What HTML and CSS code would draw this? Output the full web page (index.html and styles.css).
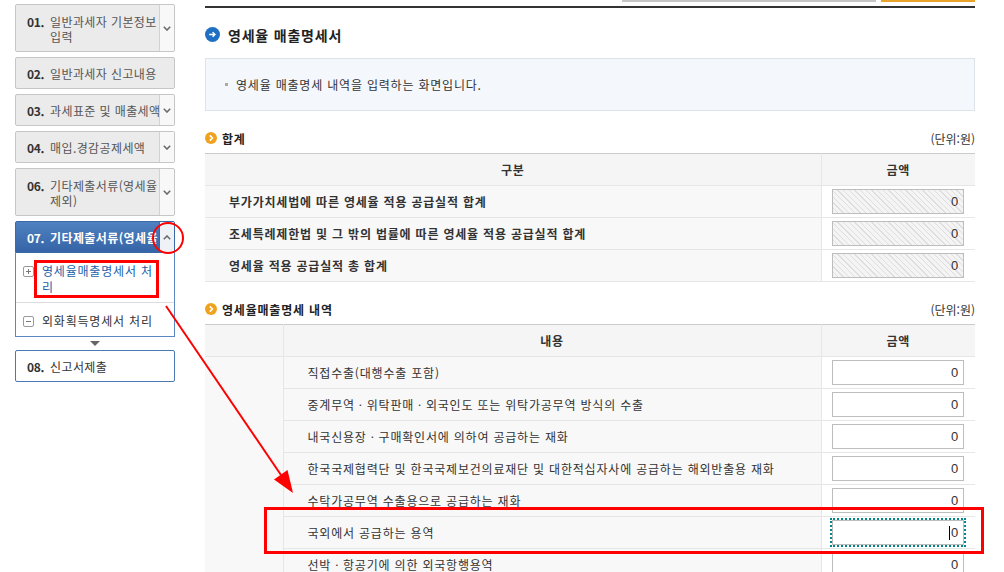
FILE: index.html
```html
<!DOCTYPE html>
<html lang="ko">
<head>
    <meta charset="UTF-8">
    <meta name="viewport" content="width=device-width, initial-scale=1.0">
    <title>영세율 매출명세서</title>
    <link rel="stylesheet" href="styles.css">
</head>
<body>
<div class="page">
    <aside class="steps">
        <div class="step tall">
            <span class="num">01.</span>
            <span class="label">일반과세자 기본정보<br>입력</span>
            <span class="chev"><svg width="8" height="5" viewBox="0 0 8 5"><polyline points="0.8,0.8 4,4 7.2,0.8" /></svg></span>
        </div>
        <div class="step">
            <span class="num">02.</span>
            <span class="label">일반과세자 신고내용</span>
        </div>
        <div class="step">
            <span class="num">03.</span>
            <span class="label">과세표준 및 매출세액</span>
            <span class="chev"><svg width="8" height="5" viewBox="0 0 8 5"><polyline points="0.8,0.8 4,4 7.2,0.8" /></svg></span>
        </div>
        <div class="step">
            <span class="num">04.</span>
            <span class="label">매입.경감공제세액</span>
            <span class="chev"><svg width="8" height="5" viewBox="0 0 8 5"><polyline points="0.8,0.8 4,4 7.2,0.8" /></svg></span>
        </div>
        <div class="step tall">
            <span class="num">06.</span>
            <span class="label">기타제출서류(영세율<br>제외)</span>
            <span class="chev"><svg width="8" height="5" viewBox="0 0 8 5"><polyline points="0.8,0.8 4,4 7.2,0.8" /></svg></span>
        </div>
        <div class="step step-open">
            <span class="num">07.</span>
            <span class="label">기타제출서류(영세율 적용)</span>
            <span class="chev"><svg width="8" height="5" viewBox="0 0 8 5"><polyline points="0.8,4.2 4,1 7.2,4.2" /></svg></span>
        </div>
        <div class="sub-menu">
            <div class="sub-item current">
                <span class="tree-icon"><svg width="11" height="11" viewBox="0 0 11 11"><rect x="0.5" y="0.5" width="10" height="10" rx="1.5" /><path d="M3 5.5h5M5.5 3v5" /></svg></span>
                <span class="sub-label">영세율매출명세서 처리</span>
            </div>
            <div class="sub-item">
                <span class="tree-icon"><svg width="11" height="11" viewBox="0 0 11 11"><rect x="0.5" y="0.5" width="10" height="10" rx="1.5" /><path d="M3 5.5h5" /></svg></span>
                <span class="sub-label">외화획득명세서 처리</span>
            </div>
        </div>
        <div class="step-arrow"></div>
        <div class="step step-next">
            <span class="num">08.</span>
            <span class="label">신고서제출</span>
        </div>
    </aside>

    <main class="content">
        <div class="top-strip"><span class="search-edge"></span><span class="btn-edge"></span></div>
        <div class="rule"></div>

        <h2 class="page-title">
            <svg class="title-icon" width="15" height="15" viewBox="0 0 15 15"><circle cx="7.5" cy="7.5" r="7.5" fill="#1f6fc2" /><path d="M4.2 7.5h5.6M7.6 5.2l2.3 2.3-2.3 2.3" stroke="#fff" stroke-width="1.5" fill="none" /></svg>
            영세율 매출명세서
        </h2>

        <div class="guide"><span class="dot"></span>영세율 매출명세 내역을 입력하는 화면입니다.</div>

        <div class="sec-head">
            <h3><svg class="sec-icon" width="12" height="12" viewBox="0 0 12 12"><circle cx="6" cy="6" r="6" fill="#f0a21e" /><path d="M4.8 3.4l2.6 2.6-2.6 2.6" stroke="#fff" stroke-width="1.6" fill="none" /></svg>합계</h3>
            <span class="unit">(단위:원)</span>
        </div>
        <table class="grid">
            <colgroup><col><col class="amt-col"></colgroup>
            <thead>
                <tr><th>구분</th><th class="amt">금액</th></tr>
            </thead>
            <tbody>
                <tr><td class="item bold">부가가치세법에 따른 영세율 적용 공급실적 합계</td><td class="amt"><input class="money locked" type="text" value="0" readonly></td></tr>
                <tr><td class="item bold">조세특례제한법 및 그 밖의 법률에 따른 영세율 적용 공급실적 합계</td><td class="amt"><input class="money locked" type="text" value="0" readonly></td></tr>
                <tr><td class="item bold">영세율 적용 공급실적 총 합계</td><td class="amt"><input class="money locked" type="text" value="0" readonly></td></tr>
            </tbody>
        </table>

        <div class="sec-head">
            <h3><svg class="sec-icon" width="12" height="12" viewBox="0 0 12 12"><circle cx="6" cy="6" r="6" fill="#f0a21e" /><path d="M4.8 3.4l2.6 2.6-2.6 2.6" stroke="#fff" stroke-width="1.6" fill="none" /></svg>영세율매출명세 내역</h3>
            <span class="unit">(단위:원)</span>
        </div>
        <table class="grid detail">
            <colgroup><col class="group-col"><col><col class="amt-col"></colgroup>
            <thead>
                <tr><th class="group"></th><th>내용</th><th class="amt">금액</th></tr>
            </thead>
            <tbody>
                <tr><td class="group" rowspan="7"></td><td class="item">직접수출(대행수출 포함)</td><td class="amt"><input class="money" type="text" value="0"></td></tr>
                <tr><td class="item">중계무역ㆍ위탁판매ㆍ외국인도 또는 위탁가공무역 방식의 수출</td><td class="amt"><input class="money" type="text" value="0"></td></tr>
                <tr><td class="item">내국신용장ㆍ구매확인서에 의하여 공급하는 재화</td><td class="amt"><input class="money" type="text" value="0"></td></tr>
                <tr><td class="item">한국국제협력단 및 한국국제보건의료재단 및 대한적십자사에 공급하는 해외반출용 재화</td><td class="amt"><input class="money" type="text" value="0"></td></tr>
                <tr><td class="item">수탁가공무역 수출용으로 공급하는 재화</td><td class="amt"><input class="money" type="text" value="0"></td></tr>
                <tr><td class="item">국외에서 공급하는 용역</td><td class="amt"><span class="caret-wrap"><input class="money focused" type="text" value="0"></span></td></tr>
                <tr><td class="item">선박ㆍ항공기에 의한 외국항행용역</td><td class="amt"><input class="money" type="text" value="0"></td></tr>
            </tbody>
        </table>
    </main>
</div>

<!-- 안내용 빨간 표시 -->
<svg class="marks" width="1004" height="572" viewBox="0 0 1004 572">
    <circle cx="168" cy="238" r="15" />
    <rect x="35.5" y="261.5" width="122" height="35" class="box" />
    <line x1="166" y1="306" x2="281" y2="475" />
    <polygon points="293,493 274,479.5 287.5,470" />
    <rect x="265.5" y="508.5" width="717" height="44" class="box" />
</svg>
</body>
</html>
```

FILE: styles.css
```css
* { box-sizing: border-box; }
body {
    margin: 0;
    background: #fff;
    color: #333;
    font-family: "Noto Sans CJK KR", "Noto Sans", sans-serif;
    font-size: 12px;
    letter-spacing: 0.8px;
    overflow: hidden;
}
.page {
    display: flex;
    gap: 30px;
    padding-left: 15px;
}

/* 왼쪽 단계 메뉴 */
.steps {
    width: 160px;
    flex: none;
    padding-top: 4px;
    letter-spacing: 0.4px;
}
.step {
    display: flex;
    align-items: stretch;
    min-height: 32px;
    margin-bottom: 5px;
    border: 1px solid #c6c6c6;
    border-radius: 2px;
    background: #ebebeb;
    overflow: hidden;
}
.step .num {
    flex: none;
    width: 34px;
    padding: 8px 0 0 11px;
    line-height: 15px;
    font-weight: 700;
    color: #333;
    letter-spacing: -0.3px;
}
.step .label {
    flex: 1;
    min-width: 0;
    padding: 8px 0 7px;
    line-height: 15px;
    color: #555;
    white-space: nowrap;
    overflow: hidden;
}
.step.tall .num { padding-top: 9px; }
.step.tall .label { padding: 9px 0 7px; }
.step .chev {
    flex: none;
    width: 15px;
    display: flex;
    align-items: center;
    justify-content: center;
    background: #f8f8f8;
    border-left: 1px solid #d2d2d2;
}
.chev svg polyline {
    fill: none;
    stroke: #6b6b6b;
    stroke-width: 1.6;
}
.step-open {
    margin-bottom: 0;
    border-color: #3b69a8;
    border-radius: 2px 2px 0 0;
    background: linear-gradient(#4f80c0, #3565a6);
}
.step-open .num,
.step-open .label {
    color: #fff;
    font-weight: 700;
}
.step-open .chev {
    background: #eef1f5;
    border-left-color: #3b69a8;
}
.sub-menu {
    border: 1px solid #5a86c1;
    border-top: none;
    background: #fff;
    letter-spacing: 0.8px;
}
.sub-item {
    display: flex;
    align-items: flex-start;
    gap: 8px;
    padding: 10px 12px 7px 7px;
    line-height: 16px;
    color: #333;
}
.sub-item + .sub-item {
    border-top: 1px solid #dcdcdc;
}
.sub-item.current {
    color: #1b5fa8;
}
.tree-icon {
    flex: none;
    height: 16px;
    display: flex;
    align-items: center;
}
.tree-icon rect {
    fill: #fff;
    stroke: #9a9a9a;
}
.tree-icon path {
    stroke: #777;
    stroke-width: 1;
}
.step-arrow {
    width: 0;
    height: 0;
    margin: 4px auto 4px;
    border-left: 5px solid transparent;
    border-right: 5px solid transparent;
    border-top: 5px solid #666;
}
.step-next {
    background: #fff;
    border-color: #4a78b5;
}
.step-next .label { color: #333; }

/* 본문 */
.content {
    width: 770px;
    flex: none;
}
.top-strip {
    display: flex;
    justify-content: flex-end;
    gap: 5px;
    height: 2px;
}
.search-edge {
    width: 254px;
    background: #c6c6c6;
}
.btn-edge {
    width: 94px;
    background: #e9a42b;
}
.rule {
    height: 2px;
    margin-top: 4px;
    background: #333;
}
.page-title {
    display: flex;
    align-items: center;
    gap: 8px;
    height: 15px;
    margin: 19px 0 0;
    font-size: 14px;
    font-weight: 700;
    color: #222;
}
.title-icon { flex: none; }
.guide {
    display: flex;
    align-items: center;
    height: 53px;
    margin-top: 16px;
    padding-left: 19px;
    background: #f4f7fb;
    border: 1px solid #dde3eb;
    color: #333;
}
.guide .dot {
    width: 3px;
    height: 3px;
    margin-right: 8px;
    background: #aaa;
}
.sec-head {
    display: flex;
    justify-content: space-between;
    align-items: center;
    height: 16px;
    margin-top: 19px;
}
.sec-head h3 {
    display: flex;
    align-items: center;
    gap: 5px;
    margin: 0;
    font-size: 12px;
    font-weight: 700;
    color: #222;
}
.unit { color: #333; letter-spacing: 0; }

.grid {
    width: 100%;
    margin-top: 7px;
    border-collapse: collapse;
    table-layout: fixed;
    border-top: 1px solid #cbcbcb;
    border-bottom: 1px solid #cbcbcb;
}
.amt-col { width: 154px; }
.group-col { width: 78px; }
.grid tr { height: 32px; }
.grid th,
.grid td {
    padding: 0;
    border-bottom: 1px solid #e6e6e6;
    vertical-align: middle;
}
.grid th {
    background: #f5f5f5;
    font-weight: 700;
    color: #333;
    text-align: center;
}
.grid td.item {
    padding-left: 24px;
    background: #f8f8f8;
    white-space: nowrap;
    color: #333;
}
.grid td.bold { font-weight: 700; }
.grid .amt {
    border-left: 1px solid #e6e6e6;
    text-align: center;
}
.grid td.amt { background: #fff; }
.grid .group {
    background: #f8f8f8;
    border-right: 1px solid #e6e6e6;
}
.grid th.group { background: #f5f5f5; }
.money {
    width: 132px;
    height: 25px;
    padding: 0 5px 0 0;
    border: 1px solid #bdbdbd;
    background: #fff;
    color: #333;
    font-family: "Liberation Sans", Arial, sans-serif;
    font-size: 13px;
    letter-spacing: 0;
    text-align: right;
    outline: none;
}
.money.locked {
    background: repeating-linear-gradient(45deg, #f4f4f4 0 3px, #dedede 3px 4px);
}
.caret-wrap {
    position: relative;
    display: inline-block;
    vertical-align: middle;
}
.money.focused {
    outline: 2px dotted #00868b;
    outline-offset: 0;
}
.caret-wrap::after {
    content: "";
    position: absolute;
    right: 14px;
    top: 6px;
    width: 1px;
    height: 14px;
    background: #000;
}

/* 빨간 안내 표시 */
.marks {
    position: absolute;
    top: 0;
    left: 0;
    pointer-events: none;
}
.marks circle,
.marks .box {
    fill: none;
    stroke: #f00;
    stroke-width: 2;
}
.marks .box { stroke-width: 3; }
.marks line {
    stroke: #f00;
    stroke-width: 2;
}
.marks polygon { fill: #f00; }
```
